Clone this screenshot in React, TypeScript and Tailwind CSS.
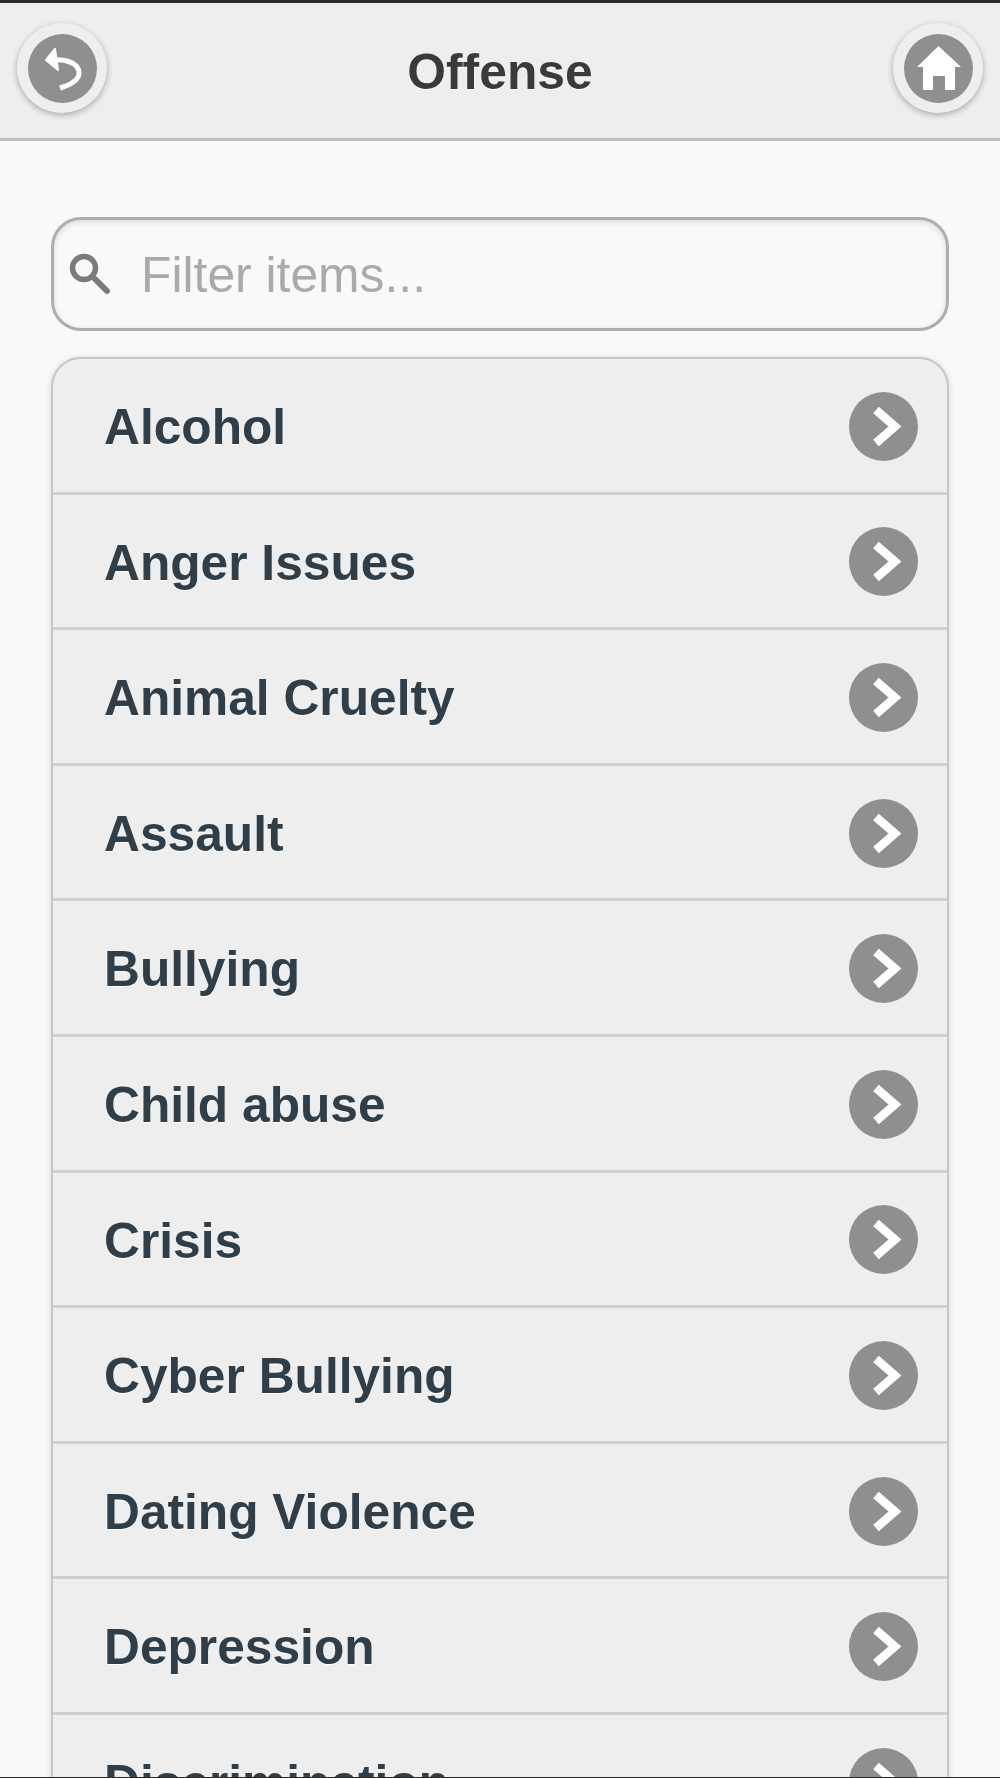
const offenses = [
  "Alcohol",
  "Anger Issues",
  "Animal Cruelty",
  "Assault",
  "Bullying",
  "Child abuse",
  "Crisis",
  "Cyber Bullying",
  "Dating Violence",
  "Depression",
  "Discrimination",
];

function RoundButton({ children }: { children: React.ReactNode }) {
  return (
    <button className="flex h-[90px] w-[90px] items-center justify-center rounded-full bg-[#eeeeee] shadow-[0_2px_6px_rgba(0,0,0,0.3)]">
      <span className="flex h-[69px] w-[69px] items-center justify-center rounded-full bg-[#8f8f8f]">
        {children}
      </span>
    </button>
  );
}

export default function App() {
  return (
    <div className="flex h-[1778px] w-[1000px] flex-col overflow-hidden bg-[#f9f9f9] font-['Liberation_Sans',Arial,sans-serif] blur-[0.5px]">
      <div className="h-[3px] shrink-0 bg-[#2a2a2a]" />
      <header className="flex h-[138px] shrink-0 items-start justify-between border-b-[3px] border-[#bdbdbd] bg-[#eeeeee] px-[17px] pt-[20px]">
        <RoundButton>
          <svg width="69" height="69" viewBox="0 0 69 69" fill="none">
            <path d="M27 15 L18 26 L30 36 Z" fill="#fff" stroke="#fff" strokeWidth="2" strokeLinejoin="round" />
            <path d="M25 26 C38 25 51 29 51 39 C51 47 42 51 32 54" stroke="#fff" strokeWidth="5" />
          </svg>
        </RoundButton>
        <h1 className="mt-[21px] text-[49.8px] leading-[56px] font-bold text-[#3a3a3a] [text-shadow:0_1px_0_#fff]">
          Offense
        </h1>
        <RoundButton>
          <svg width="69" height="69" viewBox="0 0 69 69" fill="#fff">
            <path d="M34.5 12 L57 33 H51 V56 H41 V42 H29 V56 H19 V33 H13 Z" />
          </svg>
        </RoundButton>
      </header>

      <main className="flex min-h-0 flex-1 flex-col gap-[26px] overflow-hidden px-[51px] pt-[76px]">
        <label className="flex h-[114px] shrink-0 items-center rounded-[30px] border-[3px] border-[#aeaeae] bg-[#f9f9f9] shadow-[inset_0_2px_6px_rgba(0,0,0,0.12)]">
          <svg className="ml-[14px] shrink-0" width="46" height="46" viewBox="0 0 46 46" fill="none">
            <circle cx="16" cy="17" r="11.5" stroke="#7b7b7b" strokeWidth="5.5" />
            <path d="M25 26 L39 40" stroke="#7b7b7b" strokeWidth="6" strokeLinecap="round" />
          </svg>
          <input
            placeholder="Filter items..."
            className="ml-[27px] min-w-0 flex-1 bg-transparent pt-[3px] text-[49.8px] outline-none placeholder:text-[#aaaaaa]"
          />
        </label>

        <ul className="shrink-0 rounded-[30px] border-2 border-[#c6c6c6] bg-[#eeeeee] shadow-[0_1px_6px_rgba(0,0,0,0.15)]">
          {offenses.map((name) => (
            <li
              key={name}
              className="flex h-[135.6px] items-center justify-between border-b-[3px] border-[#d0d0d0] pr-[29px] pl-[51px]"
            >
              <span className="pt-[4px] text-[49.7px] font-bold text-[#2f3e48] [text-shadow:0_1px_0_#fff]">
                {name}
              </span>
              <span className="mt-[2px] flex h-[69px] w-[69px] items-center justify-center rounded-full bg-[#8f8f8f]">
                <svg width="69" height="69" viewBox="0 0 69 69" fill="none">
                  <path d="M27 18 L46 34.5 L27 51" stroke="#fff" strokeWidth="8.5" />
                </svg>
              </span>
            </li>
          ))}
        </ul>
      </main>
      <div className="h-px shrink-0 bg-[#2a2a2a]" />
    </div>
  );
}
